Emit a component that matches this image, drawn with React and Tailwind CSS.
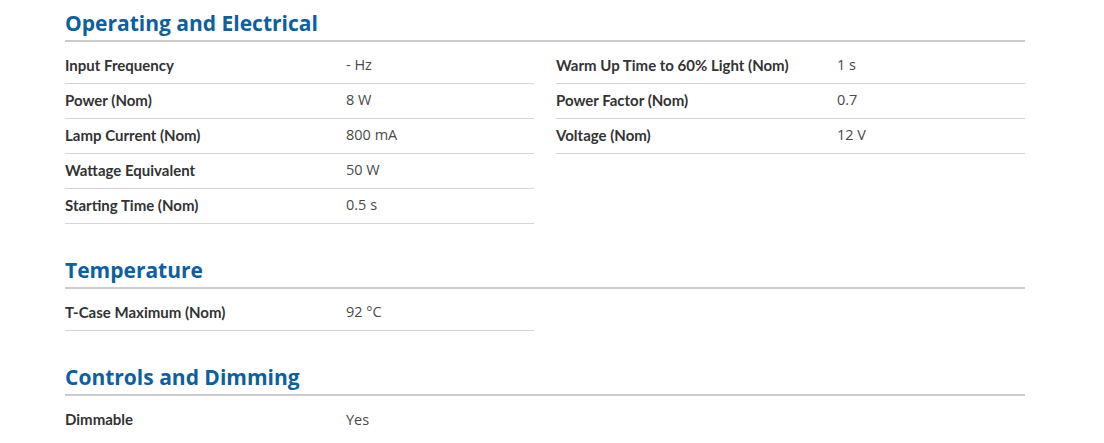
const sections = [
  {
    title: 'Operating and Electrical',
    columns: [
      [
        ['Input Frequency', '- Hz'],
        ['Power (Nom)', '8 W'],
        ['Lamp Current (Nom)', '800 mA'],
        ['Wattage Equivalent', '50 W'],
        ['Starting Time (Nom)', '0.5 s'],
      ],
      [
        ['Warm Up Time to 60% Light (Nom)', '1 s'],
        ['Power Factor (Nom)', '0.7'],
        ['Voltage (Nom)', '12 V'],
      ],
    ],
  },
  {
    title: 'Temperature',
    columns: [[['T-Case Maximum (Nom)', '92 °C']], []],
  },
  {
    title: 'Controls and Dimming',
    columns: [[['Dimmable', 'Yes']], []],
    last: true,
  },
];

function SpecRow({ label, value, noBorder }) {
  return (
    <div
      className={`flex h-[35px] items-center pb-[2px] ${noBorder ? '' : 'border-b border-[#d4d4d4]'}`}
    >
      <div className="w-[281px] shrink-0 font-['Lato',sans-serif] text-[15px] font-bold text-[#333333]">
        {label}
      </div>
      <div className="font-['Open_Sans',sans-serif] text-[14.5px] text-[#4a4a4a]">{value}</div>
    </div>
  );
}

function Section({ title, columns, first, last }) {
  return (
    <section className={first ? '' : 'mt-[32px]'}>
      <h2 className="border-b-2 border-[#cccccc] pb-[3px] font-['Open_Sans',sans-serif] text-[21px] leading-[28px] font-bold text-[#0c5fa2]">
        {title}
      </h2>
      <div className="mt-[7px] grid grid-cols-2 gap-x-[22px]">
        {columns.map((rows, i) => (
          <div key={i}>
            {rows.map(([label, value]) => (
              <SpecRow key={label} label={label} value={value} noBorder={last} />
            ))}
          </div>
        ))}
      </div>
    </section>
  );
}

export default function App() {
  return (
    <main className="min-h-screen bg-white pt-[9px] pl-[65px] font-['Lato',sans-serif]">
      <div className="w-[960px]">
        {sections.map((s, i) => (
          <Section
            key={s.title}
            title={s.title}
            columns={s.columns}
            first={i === 0}
            last={s.last}
          />
        ))}
      </div>
    </main>
  );
}
